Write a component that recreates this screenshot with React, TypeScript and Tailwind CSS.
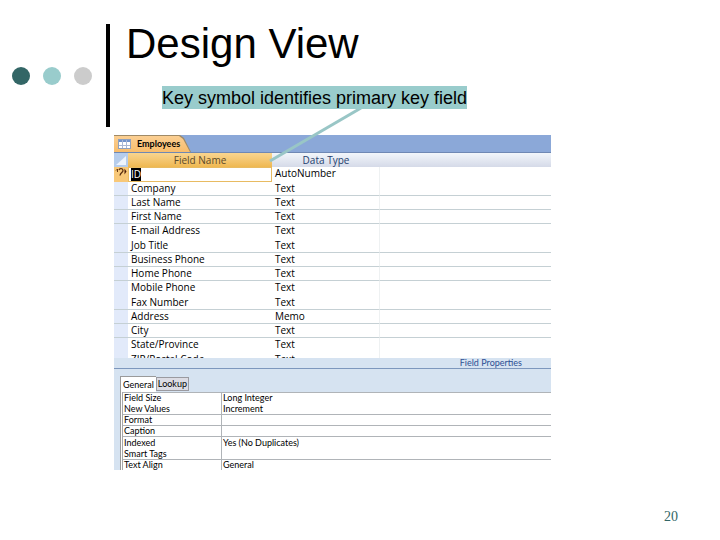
const fields = [
  ["ID", "AutoNumber"],
  ["Company", "Text"],
  ["Last Name", "Text"],
  ["First Name", "Text"],
  ["E-mail Address", "Text"],
  ["Job Title", "Text"],
  ["Business Phone", "Text"],
  ["Home Phone", "Text"],
  ["Mobile Phone", "Text"],
  ["Fax Number", "Text"],
  ["Address", "Memo"],
  ["City", "Text"],
  ["State/Province", "Text"],
  ["ZIP/Postal Code", "Text"],
];

const properties = [
  { name: "Field Size", value: "Long Integer", row: "h-[11px]", line: "border-t" },
  { name: "New Values", value: "Increment", row: "h-[11px]", line: "" },
  { name: "Format", value: "", row: "h-[11px]", line: "border-t" },
  { name: "Caption", value: "", row: "h-[11px]", line: "border-t" },
  { name: "Indexed", value: "Yes (No Duplicates)", row: "h-3", line: "border-t" },
  { name: "Smart Tags", value: "", row: "h-[11px]", line: "" },
  { name: "Text Align", value: "General", row: "h-[11px]", line: "border-t" },
];

function TableIcon() {
  return (
    <svg width="13" height="10" viewBox="0 0 13 10" aria-hidden="true">
      <rect x="0.5" y="0.5" width="12" height="9" fill="#fff" stroke="#8fa0bd" />
      <rect x="1" y="1" width="11" height="2" fill="#6f92cc" />
      <path d="M4.5 1v8M8.5 1v8M1 6.5h11" stroke="#a9b8d4" />
    </svg>
  );
}

function KeyIcon() {
  return (
    <svg width="12" height="10" viewBox="0 0 12 10" className="mx-auto block" aria-hidden="true">
      <path d="M1 3.5l1.500-1.500M2.500 2v3" stroke="#6b3a12" fill="none" />
      <path
        d="M4 3c.5-2 4-1.800 4 .5 0 2-2.500 2-3 5"
        stroke="#5b2f10"
        strokeWidth="1.300"
        fill="none"
      />
      <path d="M9.500 1.500v6l2-3z" fill="#4a1c08" />
    </svg>
  );
}

function SlideHeader() {
  return (
    <header className="flex items-start pt-5">
      <div className="mt-1 flex h-[103px] w-[110px] items-center justify-between border-r-4 border-black pr-[14px] pl-3">
        <span className="size-[18px] rounded-full bg-[#336666]" />
        <span className="size-[18px] rounded-full bg-[#99cccc]" />
        <span className="size-[18px] rounded-full bg-[#cccccc]" />
      </div>
      <div className="pl-4">
        <h1 className="text-[42px] leading-[48px]">Design View</h1>
        <p className="relative mt-[18px] ml-9 w-fit bg-[#99cccc] pt-[2px] text-[18px] leading-[21px] whitespace-nowrap">
          Key symbol identifies primary key field
          <svg
            width="94"
            height="54"
            viewBox="0 0 94 54"
            className="absolute top-full left-[107px]"
            aria-hidden="true"
          >
            <path d="M92 -1L1 52" stroke="#99c6c6" strokeWidth="3" />
          </svg>
        </p>
      </div>
    </header>
  );
}

function DocumentTab() {
  return (
    <div className="flex h-[18px] border-b border-[#6f88b4] bg-[#8ba8d8]">
      <div className="bg-[#a08a66] pt-px pr-px [clip-path:polygon(0_0,66px_0,70px_3px,77px_100%,0_100%)]">
        <div className="flex h-4 items-center gap-[6px] bg-linear-to-b from-[#fbcf93] to-[#f8bd6c] pr-3 pl-1 text-[9px] font-bold [clip-path:polygon(0_0,65px_0,69px_3px,76px_100%,0_100%)]">
          <TableIcon />
          Employees
        </div>
      </div>
    </div>
  );
}

function FieldRow({ name, type, index }: { name: string; type: string; index: number }) {
  const current = index === 0;
  const tall = index % 4 === 0;
  const line = tall ? "" : "border-b border-b-[#c5d0d4]";

  return (
    <tr className={tall ? "h-[15px] align-top" : "h-[14px] align-top"}>
      <td className={(current ? "bg-[#f8c878] p-0 " : "bg-[#e2eafa] p-0 ") + line}>
        {current && <KeyIcon />}
      </td>
      {current ? (
        <td className="border border-[#e8bb62] py-0 pr-0 pl-[2px]">
          <span className="block w-fit bg-black text-white">{name}</span>
        </td>
      ) : (
        <td className={"py-0 pr-0 pl-[3px] " + line}>{name}</td>
      )}
      <td className={"border-r border-r-[#eef1f2] py-0 pr-0 pl-[3px] " + line}>{type}</td>
      <td className={"p-0 " + line} />
    </tr>
  );
}

function FieldTable() {
  return (
    <div className="h-[205px] overflow-hidden font-['Open_Sans',sans-serif]">
      <table className="w-full table-fixed border-separate border-spacing-0 text-[10px] leading-[13px]">
        <colgroup>
          <col className="w-[14px]" />
          <col className="w-[144px]" />
          <col className="w-[108px]" />
          <col />
        </colgroup>
        <thead>
          <tr className="h-[14px] bg-linear-to-b from-[#f2f6fb] to-[#d5dae8] text-[#24406e]">
            <th className="bg-[#b6cdec] p-0">
              <svg width="14" height="13" viewBox="0 0 14 13" className="block" aria-hidden="true">
                <path d="M12 2v9H2z" fill="#eef4fc" />
              </svg>
            </th>
            <th className="bg-linear-to-b from-[#f9d58f] to-[#efb850] p-0 font-normal text-[#5c4a2a]">
              Field Name
            </th>
            <th className="p-0 font-normal">Data Type</th>
            <th className="p-0" />
          </tr>
        </thead>
        <tbody>
          {fields.map(([name, type], i) => (
            <FieldRow key={name} name={name} type={type} index={i} />
          ))}
        </tbody>
      </table>
    </div>
  );
}

function FieldProperties() {
  return (
    <section className="bg-[#d6e3f1]">
      <h2 className="border-b border-[#7d97bd] pr-[29px] text-right text-[9px] leading-[10px] text-[#2d4f93]">
        Field Properties
      </h2>
      <div className="flex items-start pt-[7px] pl-[6px] text-[9px]">
        <button className="h-4 border-t border-l border-[#9a9a9a] bg-white px-[2px] leading-3">
          General
        </button>
        <button className="mt-px h-[14px] border border-[#9a9aa0] bg-[#dcdce4] px-px leading-3">
          Lookup
        </button>
      </div>
      <div className="ml-[6px] border-l border-[#9a9a9a] bg-white pl-px">
        <table className="w-full table-fixed border-separate border-spacing-0 border-l border-[#a8a8a8] text-[9px] leading-[10px]">
          <colgroup>
            <col className="w-[99px]" />
            <col />
          </colgroup>
          <tbody>
            {properties.map(({ name, value, row, line }) => (
              <tr key={name} className={row}>
                <th
                  className={`${line} border-r border-[#b0b4b8] py-0 pr-0 pl-px text-left font-normal`}
                >
                  {name}
                </th>
                <td className={`${line} border-[#b0b4b8] py-0 pr-0 pl-px`}>{value}</td>
              </tr>
            ))}
          </tbody>
        </table>
      </div>
    </section>
  );
}

export default function App() {
  return (
    <main className="flex min-h-screen flex-col bg-white font-['Liberation_Sans',sans-serif] text-black">
      <SlideHeader />
      <div className="mt-2 mr-[169px] ml-[114px] font-['Lato',sans-serif]">
        <DocumentTab />
        <FieldTable />
        <FieldProperties />
      </div>
      <footer className="mt-auto pr-[42px] pb-[15px] text-right font-['Liberation_Serif',serif] text-[14px] leading-4 text-[#336666]">
        20
      </footer>
    </main>
  );
}
